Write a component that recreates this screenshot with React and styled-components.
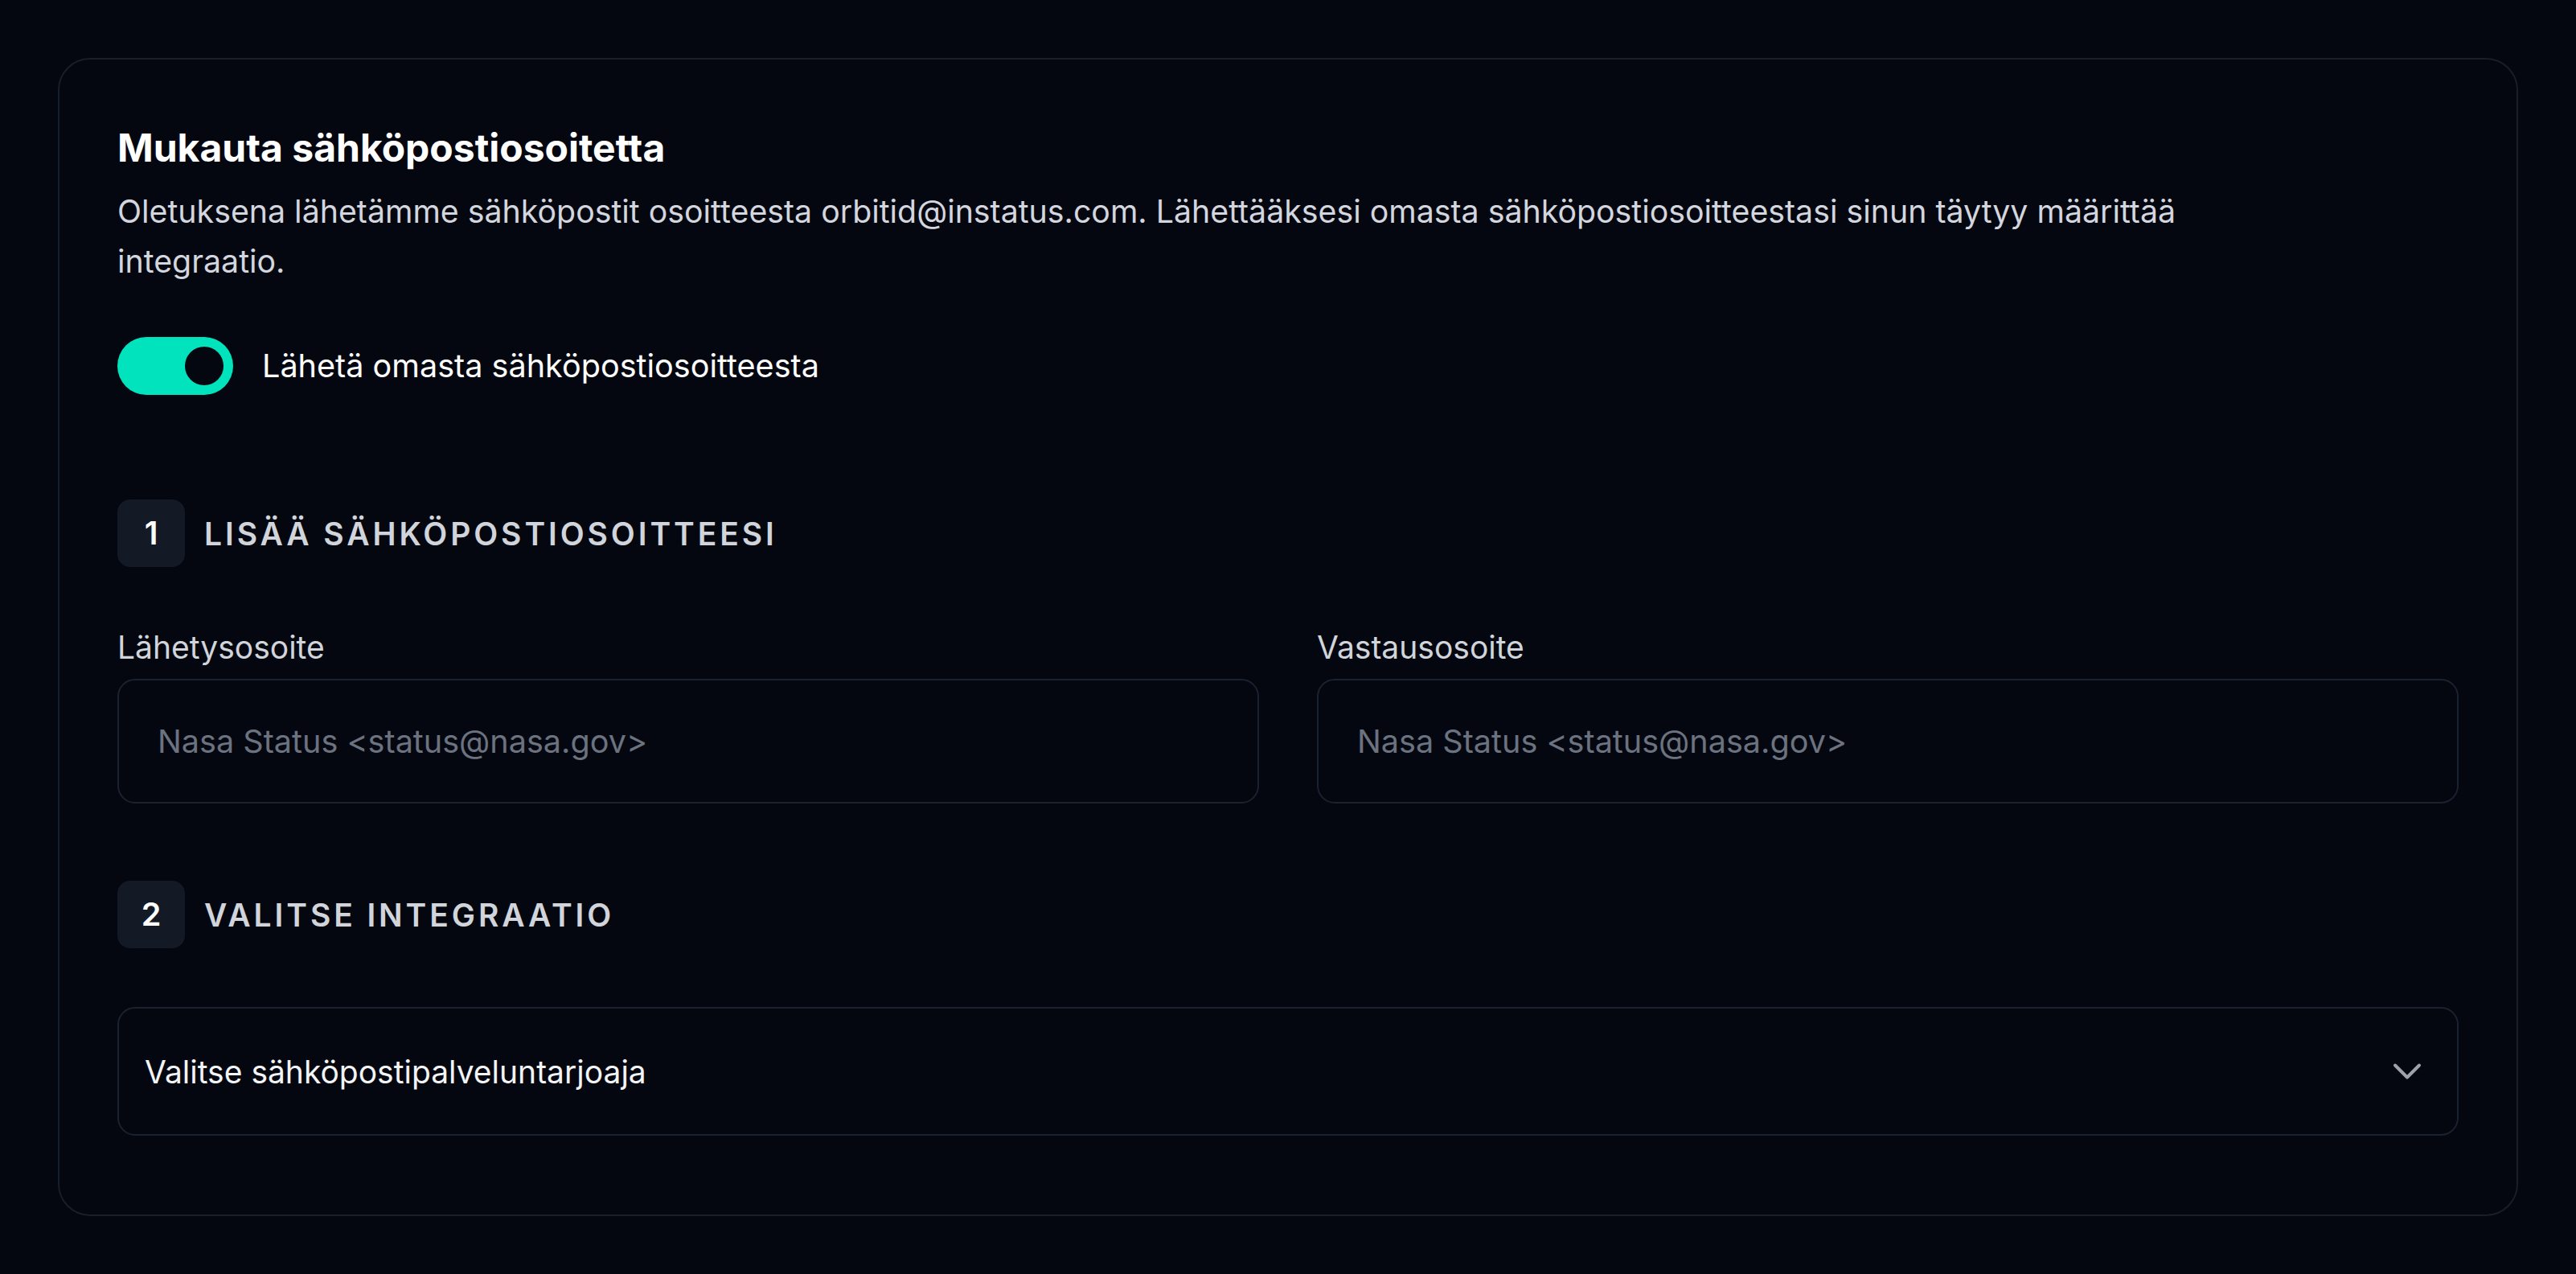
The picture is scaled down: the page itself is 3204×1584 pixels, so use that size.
import React, { useState } from "react";
import styled, { createGlobalStyle } from "styled-components";

const Global = createGlobalStyle`
  html, body { margin: 0; padding: 0; background: #04070f; }
  body { font-family: Inter, "Noto Sans", "Liberation Sans", sans-serif; color: #f3f4f6; }
  * { box-sizing: border-box; }
`;

const Page = styled.main`
  padding: 72px;
  min-height: 1584px;
  background: #04070f;
`;

const Card = styled.section`
  border: 2px solid #171e2c;
  border-radius: 40px;
  padding: 74px 72px 98px;
  display: flex;
  flex-direction: column;
`;

const Title = styled.h2`
  margin: 0;
  font-size: 48px;
  line-height: 72px;
  font-weight: 700;
  color: #ffffff;
`;

const Description = styled.p`
  margin: 12px 0 0;
  max-width: 2660px;
  font-size: 39.3px;
  line-height: 62px;
  color: #d3d6de;
`;

const ToggleRow = styled.label`
  margin-top: 63px;
  display: flex;
  align-items: center;
  gap: 36px;
  font-size: 39.6px;
  color: #ffffff;
  cursor: pointer;
`;

const Switch = styled.button`
  width: 144px;
  height: 72px;
  border: none;
  border-radius: 36px;
  background: ${(p) => (p.$on ? "#00e3bd" : "#1f2937")};
  padding: 0 12px;
  display: flex;
  align-items: center;
  justify-content: ${(p) => (p.$on ? "flex-end" : "flex-start")};
  cursor: pointer;
`;

const Knob = styled.span`
  width: 48px;
  height: 48px;
  border-radius: 50%;
  background: #04070f;
`;

const StepHeader = styled.div`
  margin-top: ${(p) => p.$top}px;
  display: flex;
  align-items: center;
  gap: 24px;
`;

const StepNumber = styled.span`
  width: 84px;
  height: 84px;
  border-radius: 16px;
  background: #131a26;
  display: flex;
  align-items: center;
  justify-content: center;
  font-size: 39.6px;
  font-weight: 600;
  color: #ffffff;
`;

const StepTitle = styled.h3`
  margin: 0;
  font-size: 39px;
  font-weight: 600;
  letter-spacing: 0.1em;
  text-transform: uppercase;
  color: #d1d5db;
`;

const FieldGrid = styled.div`
  margin-top: 76px;
  display: grid;
  grid-template-columns: 1fr 1fr;
  gap: 72px;
`;

const Field = styled.div`
  display: flex;
  flex-direction: column;
  gap: 15px;
`;

const Label = styled.label`
  font-size: 39px;
  line-height: 48px;
  color: #d1d5db;
`;

const Input = styled.input`
  width: 100%;
  height: 155px;
  padding: 0 48px;
  border: 2px solid #1a2131;
  border-radius: 22px;
  background: #04070f;
  font-family: inherit;
  font-size: 39.6px;
  color: #f3f4f6;
  outline: none;
  &::placeholder { color: #6b7280; }
`;

const Select = styled.button`
  margin-top: 73px;
  width: 100%;
  height: 160px;
  padding: 0 32px;
  border: 2px solid #1a2131;
  border-radius: 22px;
  background: #04070f;
  display: flex;
  align-items: center;
  justify-content: space-between;
  font-family: inherit;
  font-size: 39px;
  color: #f3f4f6;
  cursor: pointer;
  text-align: left;
`;

const Chevron = () => (
  <svg width="60" height="60" viewBox="0 0 24 24" fill="none" stroke="#9ca3af" strokeWidth="1.6" strokeLinecap="round" strokeLinejoin="round">
    <path d="m6 9 6 6 6-6" />
  </svg>
);

export default function App() {
  const [on, setOn] = useState(true);
  return (
    <>
      <Global />
      <Page>
        <Card>
          <Title>Mukauta sähköpostiosoitetta</Title>
          <Description>
            Oletuksena lähetämme sähköpostit osoitteesta orbitid@instatus.com. Lähettääksesi omasta sähköpostiosoitteestasi sinun täytyy määrittää integraatio.
          </Description>
          <ToggleRow>
            <Switch type="button" $on={on} onClick={() => setOn(!on)}>
              <Knob />
            </Switch>
            Lähetä omasta sähköpostiosoitteesta
          </ToggleRow>

          <StepHeader $top={130}>
            <StepNumber>1</StepNumber>
            <StepTitle>Lisää sähköpostiosoitteesi</StepTitle>
          </StepHeader>
          <FieldGrid>
            <Field>
              <Label>Lähetysosoite</Label>
              <Input placeholder="Nasa Status <status@nasa.gov>" />
            </Field>
            <Field>
              <Label>Vastausosoite</Label>
              <Input placeholder="Nasa Status <status@nasa.gov>" />
            </Field>
          </FieldGrid>

          <StepHeader $top={96}>
            <StepNumber>2</StepNumber>
            <StepTitle>Valitse integraatio</StepTitle>
          </StepHeader>
          <Select type="button">
            <span>Valitse sähköpostipalveluntarjoaja</span>
            <Chevron />
          </Select>
        </Card>
      </Page>
    </>
  );
}
